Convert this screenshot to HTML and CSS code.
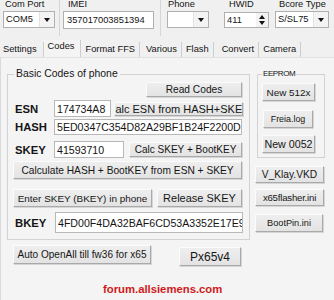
FILE: index.html
```html
<!DOCTYPE html>
<html>
<head>
<meta charset="utf-8">
<link rel="stylesheet" href="styles.css">
</head>
<body>
<div class="app">
  <div class="topbar">
    <div class="cell c-com">
      <div class="field">
        <div class="lbl ind2">Com Port</div>
        <div class="combo w-com"><span class="val">COM5</span><span class="drop"><i class="tri-down"></i></span></div>
      </div>
    </div>
    <div class="cell c-imei">
      <div class="field">
        <div class="lbl ind5">IMEI</div>
        <div class="topedit w-imei">357017003851394</div>
      </div>
    </div>
    <div class="c-rest">
      <div class="field">
        <div class="lbl ind1">Phone</div>
        <div class="combo w-phone"><span class="val"></span><span class="drop"><i class="tri-down"></i></span></div>
      </div>
      <div class="field f-hwid">
        <div class="lbl ind5">HWID</div>
        <div class="spin w-hwid"><span class="val">411</span><span class="spinbtns"><i class="tri-up"></i><i class="tri-down"></i></span></div>
      </div>
      <div class="field f-bcore">
        <div class="lbl ind4">Bcore Type</div>
        <div class="combo w-bcore"><span class="val">S/SL75</span><span class="drop"><i class="tri-down"></i></span></div>
      </div>
    </div>
  </div>

  <div class="tabs">
    <div class="tab t-settings">Settings</div>
    <div class="tab sel t-codes">Codes</div>
    <div class="tab t-format">Format FFS</div>
    <div class="tab t-various">Various</div>
    <div class="tab t-flash">Flash</div>
    <div class="tab t-convert">Convert</div>
    <div class="tab t-camera">Camera</div>
  </div>

  <div class="panel">
    <div class="main">
      <fieldset class="basic">
        <legend>Basic Codes of phone</legend>
        <div class="row r-read"><div class="btn b-read">Read Codes</div></div>
        <div class="row r-esn">
          <div class="key">ESN</div>
          <div class="edit e-esn">174734A8</div>
          <div class="btn b-calcesn f11">Calc ESN from HASH+SKEY</div>
        </div>
        <div class="row r-hash">
          <div class="key">HASH</div>
          <div class="edit e-hash">5ED0347C354D82A29BF1B24F2200D</div>
        </div>
        <div class="row r-skey">
          <div class="key">SKEY</div>
          <div class="edit e-skey">41593710</div>
          <div class="btn b-calcskey">Calc SKEY + BootKEY</div>
        </div>
        <div class="row r-calc">
          <div class="btn b-calc">Calculate HASH + BootKEY from ESN + SKEY</div>
        </div>
        <div class="row r-enter">
          <div class="btn b-enter">Enter SKEY (BKEY) in phone</div>
          <div class="btn b-release f11">Release SKEY</div>
        </div>
        <div class="row r-bkey">
          <div class="key">BKEY</div>
          <div class="edit e-bkey">4FD00F4DA32BAF6CD53A3352E17E9</div>
        </div>
      </fieldset>

      <div class="side">
        <fieldset class="eeprom">
          <legend>EEPROM</legend>
          <div class="btn b-new512">New 512x</div>
          <div class="btn b-freia">Freia.log</div>
          <div class="btn b-new0052">New 0052</div>
        </fieldset>
        <div class="btn b-vklay">V_Klay.VKD</div>
        <div class="btn b-flasher">x65flasher.ini</div>
        <div class="btn b-bootpin">BootPin.ini</div>
      </div>
    </div>

    <div class="bottom">
      <div class="btn b-auto">Auto OpenAll till fw36 for x65</div>
      <div class="btn b-px">Px65v4</div>
    </div>

    <div class="forum">forum.allsiemens.com</div>
  </div>
</div>
</body>
</html>
```

FILE: styles.css
```css
html, body {
  margin: 0;
  padding: 0;
  background: #f0f0f0;
}

.app {
  width: 334px;
  height: 300px;
  overflow: hidden;
  background: #f0f0f0;
  font-family: "Liberation Sans", Arial, sans-serif;
  color: #141414;
}

/* ---------- top bar ---------- */
.topbar {
  display: flex;
  height: 37px;
}

.cell {
  box-sizing: border-box;
  height: 36px;
  border-right: 1px solid #d6d6d6;
  padding-left: 3px;
}

.c-com { width: 60px; }
.c-imei { width: 101px; }

.c-rest {
  display: flex;
  padding-left: 6px;
}

.field {
  display: flex;
  flex-direction: column;
}

.f-hwid { margin-left: 15px; }
.f-bcore { margin-left: 6px; }

.lbl {
  font-size: 9.3px;
  line-height: 9px;
  height: 9px;
  margin-bottom: 2px;
  white-space: nowrap;
}

.ind1 { padding-left: 1px; }
.ind2 { padding-left: 2px; }
.ind4 { padding-left: 4px; }
.ind5 { padding-left: 5px; }

.combo, .spin, .topedit {
  box-sizing: border-box;
  height: 17px;
  border: 1px solid #b0b0b0;
  background: #fff;
  display: flex;
  font-size: 9.3px;
}

.combo .val, .spin .val {
  flex: 1;
  line-height: 15px;
  padding-left: 2px;
  white-space: nowrap;
}

.topedit {
  height: 18px;
  line-height: 16px;
  padding-left: 3px;
  white-space: nowrap;
}

.w-com { width: 52px; }
.w-imei { width: 91px; }
.w-phone { width: 42px; }
.w-bcore { width: 54px; }
.w-hwid { width: 45px; height: 16px; margin-top: 1px; }

.drop {
  width: 14px;
  background: #f3f3f3;
  border-left: 1px solid #e2e2e2;
  display: flex;
  align-items: center;
  justify-content: center;
}

.spinbtns {
  width: 12px;
  display: flex;
  flex-direction: column;
  align-items: center;
  justify-content: center;
  gap: 2px;
  background: #f3f3f3;
}

.tri-down {
  display: block;
  width: 0;
  height: 0;
  border-left: 3.5px solid transparent;
  border-right: 3.5px solid transparent;
  border-top: 4px solid #111;
}

.tri-up {
  display: block;
  width: 0;
  height: 0;
  border-left: 3.5px solid transparent;
  border-right: 3.5px solid transparent;
  border-bottom: 4px solid #111;
}

/* ---------- tabs ---------- */
.tabs {
  display: flex;
  align-items: flex-end;
  height: 20px;
}

.tab {
  height: 15px;
  line-height: 15px;
  font-size: 9.3px;
  padding: 0 4px 0 4px;
  border-right: 1px solid #cdcdcd;
  white-space: nowrap;
}

.t-settings { padding-left: 3px; padding-right: 6px; }
.t-codes { padding-right: 6px; }
.t-various { padding-left: 6px; }
.t-convert { padding-left: 8px; }

.tab.sel {
  height: 17px;
  line-height: 13px;
  background: #f4f4f4;
}

/* ---------- panel ---------- */
.panel {
  box-sizing: border-box;
  height: 243px;
  background: #f4f4f4;
  border-left: 1px solid #dadada;
  border-top: 1px solid #e2e2e2;
  padding: 10px 0 0 6px;
}

.main {
  display: flex;
  align-items: flex-start;
}

fieldset {
  margin: 0;
  min-width: 0;
  border: 1px solid #d2d2d2;
}

legend {
  font-size: 10.4px;
  line-height: 12px;
  padding: 0 2px;
}

.basic {
  box-sizing: border-box;
  width: 243px;
  padding: 2px 6px 6px 5px;
}

.basic legend { margin-left: 1px; }

.row {
  display: flex;
  align-items: center;
}

.r-read { height: 15px; margin-bottom: 3px; }
.r-esn { height: 17px; margin-bottom: 2px; }
.r-hash { height: 16px; margin-bottom: 6px; }
.r-skey { height: 17px; margin-bottom: 3px; }
.r-calc { height: 18px; margin-bottom: 10px; }
.r-enter { height: 18px; margin-bottom: 5px; }
.r-bkey { height: 21px; }

.key {
  width: 41px;
  flex: none;
  box-sizing: border-box;
  padding-left: 2px;
  font-weight: bold;
  font-size: 11.3px;
}

.edit {
  box-sizing: border-box;
  height: 100%;
  background: #fff;
  border: 1px solid #b8b8b8;
  font-size: 10.6px;
  white-space: nowrap;
  overflow: hidden;
  padding-left: 2px;
  display: flex;
  align-items: center;
  flex: none;
}

.e-esn { width: 57px; }
.e-hash { width: 188px; }
.e-skey { width: 70px; }
.e-bkey { width: 188px; margin-left: 1px; }

.btn {
  box-sizing: border-box;
  flex: none;
  display: flex;
  align-items: center;
  justify-content: center;
  white-space: nowrap;
  overflow: hidden;
  background: linear-gradient(#eeeeee, #e3e3e3);
  border: 1px solid;
  border-color: #fbfbfb #a9a9a9 #a9a9a9 #fbfbfb;
  box-shadow: 1px 1px 0 #d6d6d6;
  font-size: 10.2px;
  color: #161616;
}

.f11 { font-size: 11px; }

.b-read { width: 96px; height: 15px; margin-left: 133px; }
.b-calcesn { width: 129px; height: 14px; margin-left: 3px; }
.b-calcskey { width: 113px; height: 15px; margin-left: 5px; font-size: 10.05px; }
.b-calc { width: 229px; height: 18px; }
.b-enter { width: 139px; height: 18px; font-size: 9.95px; }
.b-release { width: 85px; height: 18px; margin-left: 5px; }

/* ---------- side column ---------- */
.side {
  width: 70px;
  margin-left: 5px;
  display: flex;
  flex-direction: column;
}

.eeprom {
  box-sizing: border-box;
  width: 68px;
  margin-left: 2px;
  padding: 3px 4px 4px 4px;
  display: flex;
  flex-direction: column;
  align-items: flex-start;
}

.eeprom legend {
  font-size: 8px;
  letter-spacing: -0.4px;
  margin-left: 0;
  padding: 0 1px;
}

.b-new512 { width: 53px; height: 18px; font-size: 9.9px; }
.b-freia { width: 50px; height: 18px; margin-top: 9px; margin-left: 1px; font-size: 8.9px; }
.b-new0052 { width: 53px; height: 18px; margin-top: 7px; font-size: 10.7px; }

.b-vklay { width: 69px; height: 17px; margin-top: 8px; font-size: 10.2px; }
.b-flasher { width: 69px; height: 17px; margin-top: 6px; font-size: 9.6px; letter-spacing: -0.2px; }
.b-bootpin { width: 68px; height: 18px; margin-top: 8px; font-size: 9.2px; }

/* ---------- bottom ---------- */
.bottom {
  display: flex;
  align-items: flex-start;
  margin-top: 5px;
}

.b-auto { width: 138px; height: 19px; margin-left: 6px; font-size: 10.05px; }
.b-px { width: 62px; height: 19px; margin-left: 28px; margin-top: 2px; font-size: 12px; }

.forum {
  margin-top: 17px;
  padding-left: 96px;
  font-size: 11.3px;
  line-height: 13px;
  font-weight: bold;
  color: #d01a1a;
}
```
